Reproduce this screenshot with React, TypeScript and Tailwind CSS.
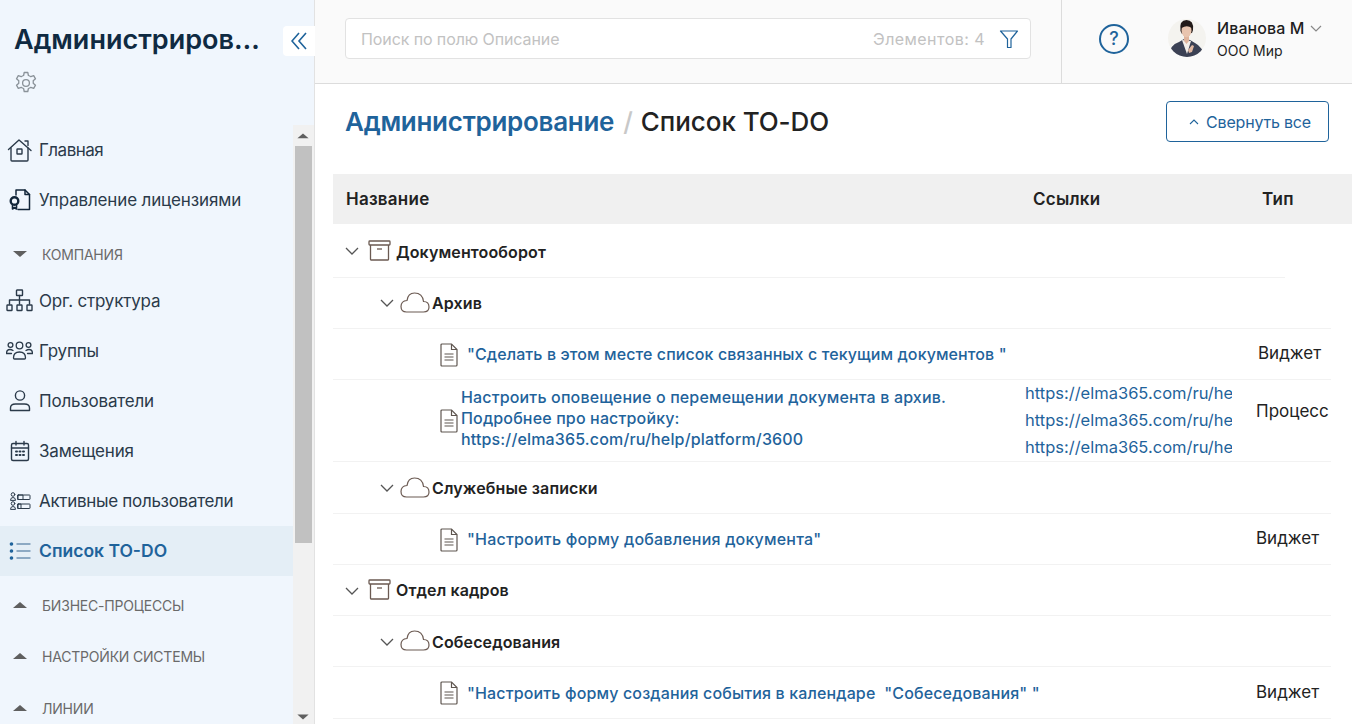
import React from "react";

const font = { fontFamily: "Inter, 'Noto Sans', sans-serif" };

const Ic = ({ children, w = 24, h = 24, vb = "0 0 24 24", c = "#2b3a4a", sw = 1.4 }: any) => (
  <svg width={w} height={h} viewBox={vb} fill="none" stroke={c} strokeWidth={sw} strokeLinecap="round" strokeLinejoin="round" className="shrink-0">
    {children}
  </svg>
);

const Home = () => (
  <Ic w={26} h={26} vb="0 0 26 26">
    <path d="M1.5 12.5 L12 3 L24 13.5" />
    <path d="M4 11 V23 Q4 24 5 24 H20 Q21 24 21 23 V11" />
    <path d="M18 4 h3 v4.5" />
    <rect x="10" y="12" width="5" height="5" rx="0.5" />
  </Ic>
);
const License = () => (
  <Ic c="#12263a" sw={1.5}>
    <path d="M8 7 V2 H17 L21.5 6.5 V21.5 H10" />
    <path d="M17 2 V6.5 H21.5" />
    <circle cx="6.5" cy="13" r="3.8" strokeWidth={2.4} />
    <path d="M4.5 17 V21 L6.5 19.5 L8.5 21 V17" strokeWidth={1.6} />
  </Ic>
);
const Org = () => (
  <Ic w={27} h={24} vb="0 0 27 24">
    <rect x="10.5" y="1" width="6" height="5.5" rx="0.5" />
    <path d="M13.5 6.5 V15 M3.5 15 V11 H23.5 V15" />
    <rect x="1" y="16" width="5" height="5.5" rx="0.5" />
    <rect x="11" y="16" width="5" height="5.5" rx="0.5" />
    <rect x="21" y="16" width="5" height="5.5" rx="0.5" />
  </Ic>
);
const Groups = () => (
  <Ic w={27} h={24} vb="0 0 27 24" sw={1.3}>
    <circle cx="13.5" cy="6.5" r="3.3" />
    <circle cx="4.5" cy="6" r="2.4" />
    <circle cx="22.5" cy="6" r="2.4" />
    <path d="M7.5 19 q0 -6 6 -6 q6 0 6 6 q0 1 -1 1 h-10 q-1 0 -1 -1z" />
    <path d="M7 11.5 q-1.5 -1 -3 -1 q-3.5 0 -3.5 4 h5" />
    <path d="M20 11.5 q1.5 -1 3 -1 q3.5 0 3.5 4 h-5" />
  </Ic>
);
const User = () => (
  <Ic>
    <circle cx="12" cy="6.5" r="4.6" />
    <path d="M2.5 21.5 V19 q0 -4 5 -4 h9 q5 0 5 4 v2.5 z" />
  </Ic>
);
const Calendar = () => (
  <Ic>
    <rect x="3.5" y="4.5" width="17" height="17" rx="1.5" />
    <path d="M3.5 9 H20.5 M8 2.5 V6 M16 2.5 V6" />
    <path d="M8 12.5 h1 M11.5 12.5 h1 M15 12.5 h1 M8 16 h1 M11.5 16 h1 M15 16 h1" strokeWidth={2} />
  </Ic>
);
const Active = () => (
  <Ic sw={1}>
    <circle cx="5" cy="5.5" r="1.8" />
    <path d="M2.5 11 q0 -2.5 2.5 -2.5 q2.5 0 2.5 2.5 z" />
    <circle cx="5" cy="14.5" r="1.8" />
    <path d="M2.5 20 q0 -2.5 2.5 -2.5 q2.5 0 2.5 2.5 z" />
    <rect x="10" y="6" width="12" height="4.5" rx="0.5" />
    <path d="M10 6 h5 v4.5 h-5z" />
    <rect x="10" y="15" width="12" height="4.5" rx="0.5" />
    <path d="M10 15 h3 v4.5 h-3z" />
  </Ic>
);
const ListIc = () => (
  <Ic c="#1f639b">
    <circle cx="3.5" cy="5" r="1.1" fill="#1f639b" />
    <circle cx="3.5" cy="12" r="1.1" fill="#1f639b" />
    <circle cx="3.5" cy="19" r="1.1" fill="#1f639b" />
    <path d="M9 5 H22 M9 12 H22 M9 19 H22" stroke="#6f93b3" />
  </Ic>
);
const Gear = () => (
  <svg width="24" height="24" viewBox="0 0 24 24" fill="none" stroke="#8a9299" strokeWidth="1.3" strokeLinejoin="round">
    <circle cx="12" cy="12" r="3.4" />
    <path d="M10.2 1.5 h3.6 l.6 3 q1.3 .4 2.4 1.2 l2.9 -1 1.8 3.1 -2.3 2 q.2 1.2 0 2.4 l2.3 2 -1.8 3.1 -2.9 -1 q-1.1 .8 -2.4 1.2 l-.6 3 h-3.6 l-.6 -3 q-1.3 -.4 -2.4 -1.2 l-2.9 1 -1.8 -3.1 2.3 -2 q-.2 -1.2 0 -2.4 l-2.3 -2 1.8 -3.1 2.9 1 q1.1 -.8 2.4 -1.2 z" />
  </svg>
);

const Up = () => <span className="block w-0 h-0 border-x-[7px] border-x-transparent border-b-[6px] border-b-[#5f5f5f]" />;
const Down = () => <span className="block w-0 h-0 border-x-[7px] border-x-transparent border-t-[6px] border-t-[#5f5f5f]" />;

const NavItem = ({ icon, label, active, tr = "tracking-[-0.2px]" }: any) => (
  <div className={`flex items-center h-[50px] ${active ? "bg-[#e4eef6]" : ""}`}>
    <span className="w-[39px] flex justify-center shrink-0">{icon}</span>
    <span className={active ? "text-[17.5px] font-semibold text-[#1f639b]" : `pt-[2px] text-[17px] text-[#2b3a4a] ${tr}`}>{label}</span>
  </div>
);

const Section = ({ label, open, h = "h-[51px]" }: any) => (
  <div className={`flex items-center ${h}`}>
    <span className="w-[42px] pl-[13px] shrink-0">{open ? <Down /> : <Up />}</span>
    <span className="text-[14px] text-[#6a6a6a] tracking-[-0.2px]">{label}</span>
  </div>
);

const Chevron = () => (
  <svg width="14" height="8" viewBox="0 0 14 8" fill="none" stroke="#555" strokeWidth="1.3" className="shrink-0">
    <path d="M1 1 L7 7 L13 1" />
  </svg>
);
const Box = () => (
  <svg width="23" height="21" viewBox="0 0 23 21" fill="none" stroke="#6b5a52" strokeWidth="1.3" className="shrink-0 -translate-y-[1px]">
    <rect x="1" y="1" width="21" height="4" rx="0.8" />
    <path d="M2.5 5 V19.5 Q2.5 20 3 20 H20 Q20.5 20 20.5 19.5 V5" />
    <path d="M9 9 H14" />
  </svg>
);
const Cloud = () => (
  <svg width="30" height="21" viewBox="0 0 30 21" fill="none" stroke="#6b5a52" strokeWidth="1.2" className="shrink-0 -translate-y-[1px]">
    <path d="M6.5 20 H23.5 Q29 20 29 15 Q29 9.5 23.5 9.5 Q22.5 1 14.5 1 Q8 1 7 8.5 Q1 9 1 14.5 Q1 20 6.5 20 Z" />
  </svg>
);
const Doc = () => (
  <svg width="18" height="24" viewBox="0 0 18 24" fill="none" stroke="#5f5650" strokeWidth="1.2" className="shrink-0">
    <path d="M1 2 Q1 1 2 1 H11.5 L17 6.5 V22 Q17 23 16 23 H2 Q1 23 1 22 Z" />
    <path d="M11.5 1 V6.5 H17" />
    <path d="M4.5 11 H13.5 M4.5 14 H13.5 M4.5 17 H13.5" />
  </svg>
);

const Avatar = () => (
  <svg width="38" height="38" viewBox="0 0 38 38" className="shrink-0 rounded-full">
    <rect width="38" height="38" fill="#f4f3ef" />
    <path d="M1 38 Q1 26 11 23 L16 20 L22 21 L27 24 Q35 28 36 38 Z" fill="#3b4154" />
    <path d="M14 21 L19 35 L23 22 Z" fill="#f3eee8" />
    <path d="M16 16 h5 v6 l-2.5 3 -2.5 -3z" fill="#dfb49c" />
    <path d="M12.5 12 Q11 1 18.5 1 Q26 1 25 11 L24 14 L14 15 Z" fill="#221a18" />
    <ellipse cx="18.5" cy="11.5" rx="5" ry="6.8" fill="#e8c4ae" />
    <path d="M13.5 9 Q14 3.5 19 3.5 Q24 4.5 23.8 9 Q19 5.5 13.5 9Z" fill="#221a18" />
    <path d="M20 31 l4 -5 2 1 -2 6 -3 1z" fill="#e0b8a2" />
  </svg>
);

const Link = "text-[#1f639b] font-medium";

const Row = ({ h, indent, border = "w-full", type, typePad = "pl-[0px]", links, children }: any) => (
  <div className={`${h} relative flex`}>
    <div className={`w-[692px] shrink-0 flex items-center ${indent}`}>{children}</div>
    <div className="w-[207px] shrink-0 overflow-hidden flex flex-col justify-center gap-[3px] pb-[2px]">{links}</div>
    <div className={`flex-1 flex items-center text-[17px] text-[#222] whitespace-nowrap ${typePad}`}>{type}</div>
    <div className={`absolute bottom-0 left-0 h-px bg-[#f2f2f2] ${border}`} />
  </div>
);

const Bold = ({ children }: any) => <span className="text-[16px] font-semibold text-[#222] tracking-[0.12px]">{children}</span>;

export default function App() {
  return (
    <div style={font} className="flex h-[724px] w-[1352px] overflow-hidden bg-white">
      <aside className="relative w-[315px] shrink-0 flex flex-col bg-[#f0f6fd] border-r border-r-[#e2e2e2]">
        <div className="h-[125px] shrink-0 pl-[14px] pt-[22px]">
          <div className="w-[248px] text-[27px] leading-[36px] font-semibold text-[#0f2a42] whitespace-nowrap overflow-hidden text-ellipsis">
            Администрирование
          </div>
          <div className="mt-[13px]"><Gear /></div>
        </div>
        <div className="absolute left-[283px] top-[26px] w-[32px] h-[30px] bg-white rounded-l-[4px] flex items-center justify-center">
          <svg width="16" height="18" viewBox="0 0 16 18" fill="none" stroke="#1f639b" strokeWidth="1.6">
            <path d="M8 1 L1 9 L8 17 M15 1 L8 9 L15 17" />
          </svg>
        </div>
        <div className="flex-1 min-h-0 flex">
          <nav className="w-[293px] shrink-0 overflow-hidden">
            <NavItem icon={<Home />} label="Главная" tr="tracking-[-0.5px]" />
            <NavItem icon={<License />} label="Управление лицензиями" tr="tracking-[-0.15px]" />
            <div className="pt-[7px]"><Section label="КОМПАНИЯ" open h="h-[44px]" /></div>
            <NavItem icon={<Org />} label="Орг. структура" />
            <NavItem icon={<Groups />} label="Группы" />
            <NavItem icon={<User />} label="Пользователи" />
            <NavItem icon={<Calendar />} label="Замещения" />
            <NavItem icon={<Active />} label="Активные пользователи" tr="tracking-[-0.3px]" />
            <NavItem icon={<ListIc />} label="Список TO-DO" active />
            <Section label="БИЗНЕС-ПРОЦЕССЫ" h="h-[58px]" />
            <Section label="НАСТРОЙКИ СИСТЕМЫ" h="h-[44px]" />
            <Section label="ЛИНИИ" h="h-[60px]" />
          </nav>
          <div className="w-[21px] bg-[#f1f1f1] flex flex-col items-center pr-[1px]">
            <div className="h-[21px] flex items-center justify-center scale-[0.8]"><Up /></div>
            <div className="w-[17px] h-[397px] bg-[#c1c1c1]" />
            <div className="flex-1" />
            <div className="h-[14px] flex items-center justify-center scale-[0.8]"><Down /></div>
          </div>
        </div>
      </aside>

      <main className="flex-1 min-w-0 flex flex-col">
        <header className="h-[84px] shrink-0 flex bg-[#fafafa] border-b border-b-[#dcdcdc]">
          <div className="w-[747px] shrink-0 border-r border-r-[#dcdcdc] pl-[30px] pt-[18px]">
            <div className="w-[686px] h-[41px] bg-white border border-[#e2e2e2] rounded-[4px] flex items-center pl-[15px] pr-[11px] text-[16px] text-[#c2c2c2]">
              <span className="tracking-[-0.1px]">Поиск по полю Описание</span>
              <span className="ml-auto mr-[14px] tracking-[0.45px]">Элементов: 4</span>
              <svg width="20" height="20" viewBox="0 0 20 20" fill="none" stroke="#1f639b" strokeWidth="1.2" strokeLinejoin="round">
                <path d="M1.5 2 H18.5 L12 10 V18.5 H8.5 V10 Z" />
              </svg>
            </div>
          </div>
          <div className="flex-1 flex items-start">
            <div className="ml-[37px] mt-[24px] w-[30px] h-[30px] rounded-full border-2 border-[#1f639b] flex items-center justify-center text-[18px] font-medium text-[#1f639b] leading-none">?</div>
            <div className="ml-[39px] mt-[19px]"><Avatar /></div>
            <div className="ml-[11px] mt-[17px]">
              <div className="flex items-center gap-[5px] text-[16px] leading-[22px] font-medium text-[#1e1e1e] tracking-[0.1px]">
                Иванова М
                <svg width="12" height="7" viewBox="0 0 12 7" fill="none" stroke="#888" strokeWidth="1.2"><path d="M1 1 L6 6 L11 1" /></svg>
              </div>
              <div className="text-[14px] leading-[22px] pt-[1px] text-[#1e1e1e]">ООО Мир</div>
            </div>
          </div>
        </header>

        <div className="flex-1 min-h-0 overflow-hidden">
          <div className="flex items-start pl-[30px] pt-[17px] h-[90px]">
            <div className="flex items-baseline pt-[3px] whitespace-nowrap">
              <span className="text-[26px] leading-[36px] font-semibold text-[#1f639b] tracking-[-0.28px]">Администрирование</span>
              <span className="text-[26px] leading-[36px] font-medium text-[#c8c8c8] ml-[9px] mr-[8px]">/</span>
              <span className="text-[26px] leading-[36px] font-medium text-[#222] tracking-[-0.07px]">Список TO-DO</span>
            </div>
            <div className="ml-auto mr-[23px] w-[163px] h-[41px] border border-[#1f639b] rounded-[4px] flex items-center justify-center gap-[7px] pl-[5px] text-[16px] text-[#1f639b] tracking-[-0.2px]">
              <svg width="10" height="6" viewBox="0 0 10 6" fill="none" stroke="#1f639b" strokeWidth="1.1"><path d="M1 5 L5 1 L9 5" /></svg>
              Свернуть все
            </div>
          </div>

          <div className="ml-[18px] w-[1019px]">
            <div className="flex h-[50px] items-center bg-[#f0f0f0] text-[17px] font-semibold text-[#222] pt-[2px]">
              <div className="w-[700px] pl-[13px] shrink-0 tracking-[0.25px]">Название</div>
              <div className="w-[229px] shrink-0 tracking-[0.25px]">Ссылки</div>
              <div className="tracking-[0.25px]">Тип</div>
            </div>

            <Row h="h-[54px]" indent="pl-[12px]" border="w-[952px]">
              <Chevron /><span className="ml-[9px]"><Box /></span>
              <span className="ml-[5px] pt-[1px]"><Bold>Документооборот</Bold></span>
            </Row>
            <Row h="h-[51px]" indent="pl-[47px] pb-[1px]" border="w-[998px]">
              <Chevron /><span className="ml-[6px]"><Cloud /></span>
              <span className="ml-[2px]"><Bold>Архив</Bold></span>
            </Row>
            <Row h="h-[51px]" indent="pl-[107px]" type="Виджет" typePad="pl-[26px] pb-[1px]" border="w-[998px]">
              <Doc />
              <span className={`ml-[9px] -translate-y-px text-[16px] tracking-[0.1px] whitespace-nowrap ${Link}`}>"Сделать в этом месте список связанных с текущим документов "</span>
            </Row>
            <Row
              h="h-[82px]"
              indent="pl-[107px]"
              type="Процесс"
              typePad="pl-[24px] pb-[18px]"
              border="w-[998px]"
              links={
                <>
                  <div className="text-[16.5px] leading-[24px] text-[#1f639b] whitespace-nowrap">https://elma365.com/ru/help/platform/3600</div>
                  <div className="text-[16.5px] leading-[24px] text-[#1f639b] whitespace-nowrap">https://elma365.com/ru/help/platform/3600</div>
                  <div className="text-[16.5px] leading-[24px] text-[#1f639b] whitespace-nowrap">https://elma365.com/ru/help/platform/3600</div>
                </>
              }
            >
              <Doc />
              <span className={`ml-[3px] -translate-y-[3px] text-[16px] tracking-[0.15px] leading-[21px] whitespace-nowrap ${Link}`}>
                Настроить оповещение о перемещении документа в архив.<br />Подробнее про настройку:<br />https://elma365.com/ru/help/platform/3600
              </span>
            </Row>
            <Row h="h-[52px]" indent="pl-[47px]" border="w-[998px]">
              <Chevron /><span className="ml-[6px]"><Cloud /></span>
              <span className="ml-[2px]"><Bold>Служебные записки</Bold></span>
            </Row>
            <Row h="h-[51px]" indent="pl-[107px]" type="Виджет" typePad="pl-[24px] pb-[1px]" border="w-[998px]">
              <Doc />
              <span className={`ml-[9px] -translate-y-px text-[16px] tracking-[0.2px] whitespace-nowrap ${Link}`}>"Настроить форму добавления документа"</span>
            </Row>
            <Row h="h-[51px]" indent="pl-[12px]" border="w-[998px]">
              <Chevron /><span className="ml-[9px]"><Box /></span>
              <span className="ml-[5px] -translate-y-px"><Bold>Отдел кадров</Bold></span>
            </Row>
            <Row h="h-[51px]" indent="pl-[47px]" border="w-[998px]">
              <Chevron /><span className="ml-[6px]"><Cloud /></span>
              <span className="ml-[2px]"><Bold>Собеседования</Bold></span>
            </Row>
            <Row h="h-[52px]" indent="pl-[107px]" type="Виджет" typePad="pl-[24px] pb-[1px]" border="w-[998px]">
              <Doc />
              <span className={`ml-[9px] text-[16px] tracking-[0.14px] whitespace-nowrap ${Link}`}>"Настроить форму создания события в календаре&nbsp; "Собеседования" "</span>
            </Row>
          </div>
        </div>
      </main>
    </div>
  );
}
